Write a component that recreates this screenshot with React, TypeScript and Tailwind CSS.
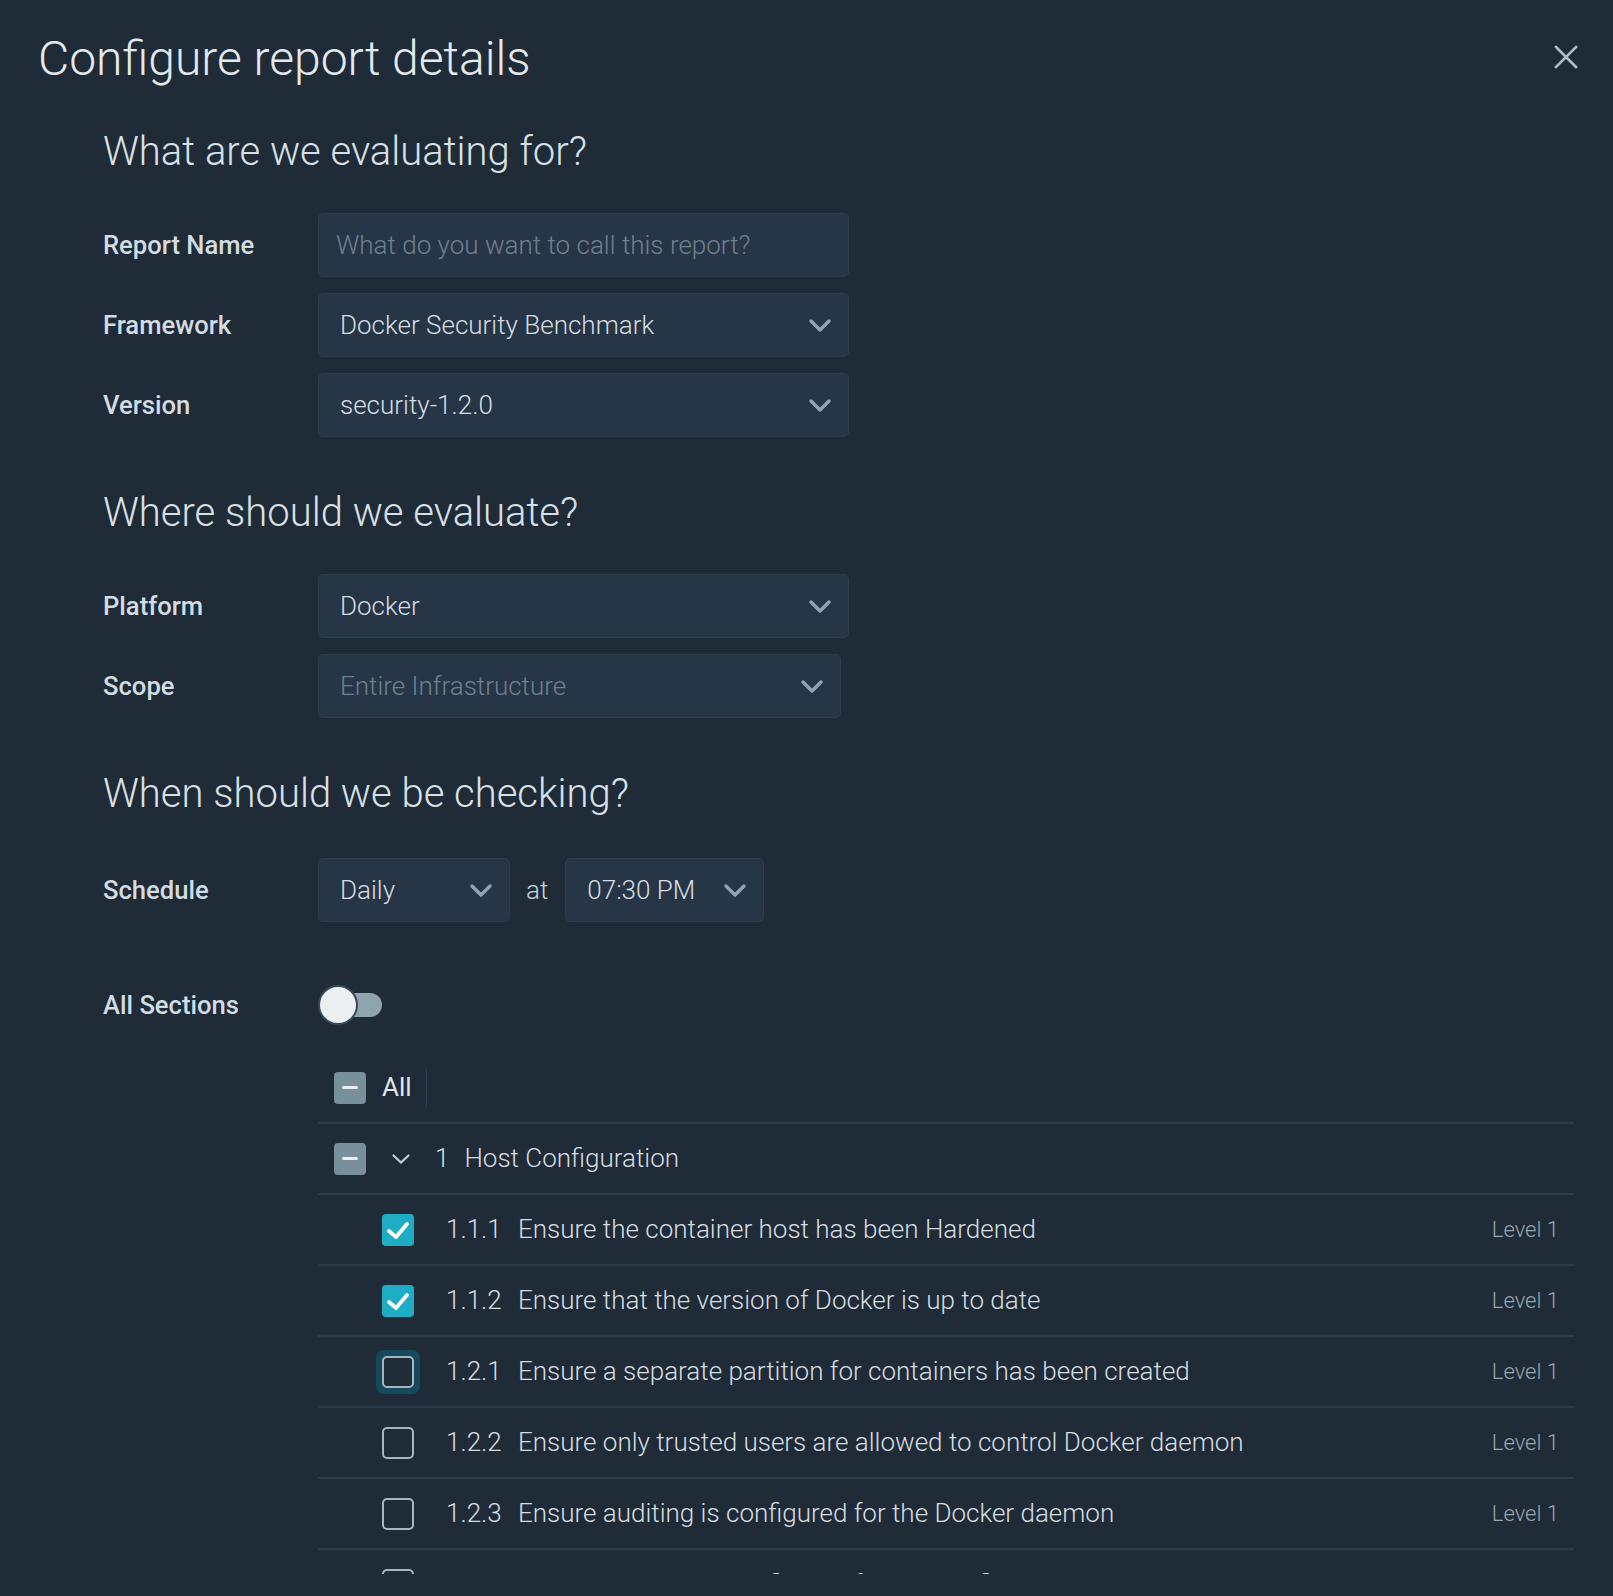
import React from "react";

const font = { fontFamily: "Roboto, 'Noto Sans', sans-serif" };

const Chevron = ({ className = "" }: { className?: string }) => (
  <svg width="24" height="15" viewBox="0 0 24 15" className={className}>
    <path d="M3 3l9 9 9-9" fill="none" stroke="currentColor" strokeWidth="3.5" strokeLinecap="round" strokeLinejoin="round" />
  </svg>
);

const Select = ({ value, placeholder, width = "w-[531px]" }: { value: string; placeholder?: boolean; width?: string }) => (
  <div className={`flex items-center justify-between h-[64px] ${width} rounded-[5px] bg-[#263646] border border-[#2c3d4e] pl-[21px] pr-[16px]`}>
    <span className={`text-[26px] font-light ${placeholder ? "text-[#6f808e]" : "text-[#d6dde2]"}`}>{value}</span>
    <Chevron className="text-[#8fa3b0]" />
  </div>
);

const Row = ({ label, children }: { label: string; children: React.ReactNode }) => (
  <div className="flex items-center">
    <div className="w-[215px] text-[25.6px] font-medium text-[#d3dce3]">{label}</div>
    {children}
  </div>
);

const Heading = ({ children, className = "" }: { children: React.ReactNode; className?: string }) => (
  <h2 className={`text-[40px] leading-[48px] font-light text-[#d9e0e5] ${className}`}>{children}</h2>
);

const Indeterminate = () => (
  <div className="w-[32px] h-[32px] rounded-[4px] bg-[#78909c] flex items-center justify-center">
    <div className="w-[16px] h-[3px] bg-[#eceff1] rounded-sm" />
  </div>
);

const Check = ({ checked, focused }: { checked: boolean; focused?: boolean }) => (
  <div className={`w-[44px] h-[44px] rounded-[8px] flex items-center justify-center ${focused ? "bg-[#154a5c]" : ""}`}>
    {checked ? (
      <div className="w-[32px] h-[32px] rounded-[4px] bg-[#1fadc6] flex items-center justify-center">
        <svg width="32" height="32" viewBox="0 0 32 32">
          <path d="M7 17l7 6 11-13" fill="none" stroke="#ffffff" strokeWidth="3.8" strokeLinecap="round" strokeLinejoin="round" />
        </svg>
      </div>
    ) : (
      <div className="w-[32px] h-[32px] rounded-[5px] border-2 border-[#a9b5be] bg-[#1f2b37]" />
    )}
  </div>
);

const items = [
  { id: "1.1.1", text: "Ensure the container host has been Hardened", checked: true },
  { id: "1.1.2", text: "Ensure that the version of Docker is up to date", checked: true },
  { id: "1.2.1", text: "Ensure a separate partition for containers has been created", checked: false, focused: true },
  { id: "1.2.2", text: "Ensure only trusted users are allowed to control Docker daemon", checked: false },
  { id: "1.2.3", text: "Ensure auditing is configured for the Docker daemon", checked: false },
  { id: "1.2.4", text: "Ensure auditing is configured for Docker files and directories - /var/lib/docker", checked: false },
];

export default function App() {
  return (
    <div style={font} className="h-[1596px] flex flex-col bg-[#1f2b37] pb-[22px] overflow-hidden">
      {/* header */}
      <div className="flex justify-between items-start pt-[30px] pl-[38px] pr-[31px]">
        <h1 className="text-[48px] leading-[58px] font-light text-[#e4e9ed]">Configure report details</h1>
        <button className="w-[32px] h-[32px] mt-[11px] flex items-center justify-center text-[#b0bec5]">
          <svg width="24" height="24" viewBox="0 0 24 24">
            <path d="M2 2l20 20M22 2L2 22" stroke="currentColor" strokeWidth="2.6" strokeLinecap="square" />
          </svg>
        </button>
      </div>

      {/* body */}
      <div className="flex-1 min-h-0 overflow-hidden px-[39px]">
        <div className="pl-[64px]">
          <Heading className="mt-[40px]">What are we evaluating for?</Heading>
          <div className="flex flex-col gap-4 mt-[37px]">
            <Row label="Report Name">
              <div className="flex items-center h-[64px] w-[531px] rounded-[5px] bg-[#263646] border border-[#2c3d4e] px-[17px]">
                <span className="text-[26px] font-light text-[#6f808e]">What do you want to call this report?</span>
              </div>
            </Row>
            <Row label="Framework">
              <Select value="Docker Security Benchmark" />
            </Row>
            <Row label="Version">
              <Select value="security-1.2.0" />
            </Row>
          </div>

          <Heading className="mt-[52px]">Where should we evaluate?</Heading>
          <div className="flex flex-col gap-4 mt-[37px]">
            <Row label="Platform">
              <Select value="Docker" />
            </Row>
            <Row label="Scope">
              <Select value="Entire Infrastructure" placeholder width="w-[523px]" />
            </Row>
          </div>

          <Heading className="mt-[52px]">When should we be checking?</Heading>
          <div className="mt-[40px]">
            <Row label="Schedule">
              <div className="flex items-center">
                <Select value="Daily" width="w-[192px]" />
                <span className="ml-[16px] text-[26px] font-light text-[#c8d1d8]">at</span>
                <div className="ml-[17px]">
                  <Select value="07:30 PM" width="w-[199px]" />
                </div>
              </div>
            </Row>
          </div>

          <div className="mt-[63px] h-[40px]">
            <Row label="All Sections">
              <div className="relative w-[64px] h-[40px] flex items-center">
                <div className="absolute left-[8px] w-[56px] h-[24px] rounded-full bg-[#90a4ae]" />
                <div className="absolute left-0 w-[40px] h-[40px] rounded-full bg-[#eceff1] border-2 border-[#34495b]" />
              </div>
            </Row>
          </div>
        </div>

        {/* sections list */}
        <div className="ml-[279px] mt-[28px] text-[26px] font-light text-[#d6dde2]">
          <div className="flex items-center h-[71px] border-b-2 border-[#2a3b4c] pl-[16px]">
            <Indeterminate />
            <span className="ml-[16px] font-normal text-[#e0e6ea]">All</span>
            <div className="ml-[14px] w-px h-[38px] bg-[#2f4152]" />
          </div>
          <div className="flex items-center h-[71px] border-b-2 border-[#2a3b4c] pl-[16px]">
            <Indeterminate />
            <svg width="18" height="10" viewBox="0 0 18 10" className="ml-[26px] text-[#c3ccd3]">
              <path d="M1.5 1.5l7.5 7 7.5-7" fill="none" stroke="currentColor" strokeWidth="2.2" strokeLinecap="round" />
            </svg>
            <span className="ml-[25px]">1</span>
            <span className="ml-[15px]">Host Configuration</span>
          </div>
          {items.map((it) => (
            <div key={it.id} className="flex items-center h-[71px] border-b-2 border-[#2a3b4c] pl-[58px] pr-[15px]">
              <Check checked={it.checked} focused={it.focused} />
              <span className="ml-[26px] w-[72px]">{it.id}</span>
              <span className="flex-1 whitespace-nowrap overflow-hidden">{it.text}</span>
              <span className="text-[22px] text-[#97a5af]">Level 1</span>
            </div>
          ))}
        </div>
      </div>
    </div>
  );
}
